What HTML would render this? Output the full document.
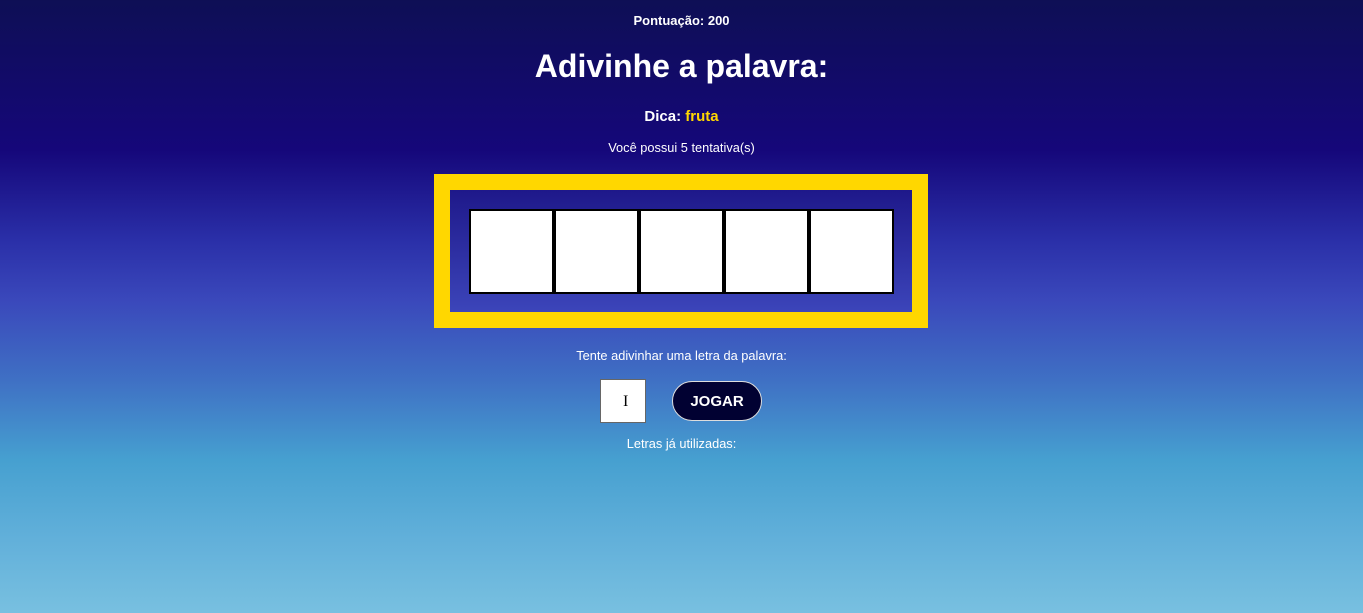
<!DOCTYPE html>
<html><head><meta charset="utf-8"><style>
body{margin:0;width:1363px;height:613px;overflow:hidden;font-family:"Liberation Sans",Arial,sans-serif;color:#fff;
background:linear-gradient(to bottom,#0e0f55 0px,#15077a 150px,#2a2fa8 240px,#3a48bb 300px,#3f70c4 380px,#46a0d0 460px,#62b0da 540px,#78c0e0 613px);position:relative}
.a{position:absolute;left:0;width:1363px;text-align:center}
.box{position:absolute;left:434px;top:174px;width:462px;height:122px;border:16px solid #ffd700;background:linear-gradient(#1e188a,#3c45ba)}
.row{position:absolute;left:19px;top:19px;display:flex}
.c{width:81px;height:81px;border:2px solid #000;background:#fff}
.inp{position:absolute;left:600px;top:379px;width:44px;height:42px;background:#fff;border:1px solid #666}
.btn{position:absolute;left:672px;top:381px;width:88px;height:38px;border:1px solid #ddd;border-radius:20px;background:#010132;font-weight:bold;font-size:15px;line-height:40px;text-align:center}
</style></head><body>
<div class="a" style="top:13px;font-size:13px;font-weight:bold">Pontuação: 200</div>
<div class="a" style="top:48px;font-size:32px;font-weight:bold">Adivinhe a palavra:</div>
<div class="a" style="top:108px;font-size:15px;font-weight:bold">Dica: <span style="color:#ffd700">fruta</span></div>
<div class="a" style="top:140px;font-size:12.8px">Você possui 5 tentativa(s)</div>
<div class="box"><div class="row"><div class="c"></div><div class="c"></div><div class="c"></div><div class="c"></div><div class="c"></div></div></div>
<div class="a" style="top:348px;font-size:12.8px">Tente adivinhar uma letra da palavra:</div>
<div class="inp"><span style="position:absolute;left:22px;top:13px;color:#000;font-size:16px;font-family:'Liberation Serif',serif">I</span></div>
<div class="btn">JOGAR</div>
<div class="a" style="top:436px;font-size:12.8px">Letras já utilizadas:</div>
</body></html>
